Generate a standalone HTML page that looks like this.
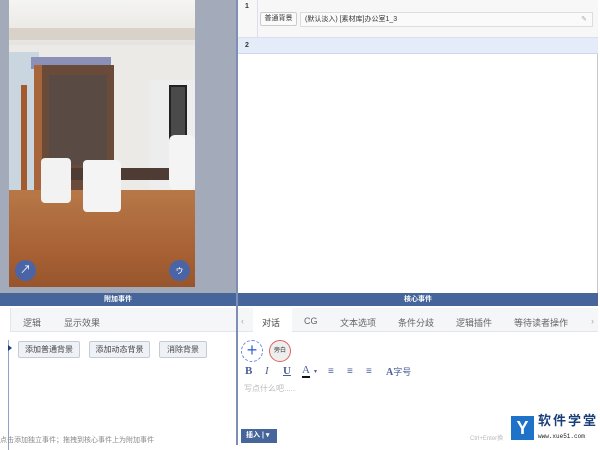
<!DOCTYPE html>
<html><head><meta charset="utf-8"><style>
*{margin:0;padding:0;box-sizing:border-box}
body{width:600px;height:445px;overflow:hidden;background:#fff;font-family:"Liberation Sans","Noto Sans CJK SC",sans-serif;position:relative;font-size:9px;color:#333}
.abs{position:absolute;white-space:nowrap}
.hdr{background:#46659a;color:#fff;font-size:7px;font-weight:bold;text-align:center;line-height:13px;height:13px}
.btn{position:absolute;border:1px solid #c5cbd6;background:#eef1f6;border-radius:2px;font-size:8px;color:#444;text-align:center;line-height:15px;height:17px}
.tab{position:absolute;font-size:9px;color:#666;top:316px}
</style></head><body>
<div class="abs" style="left:0;top:0;width:236px;height:293px;background:#a3abbb"></div>
<div class="abs" style="left:9px;top:0;width:186px;height:287px;overflow:hidden;background:#eceae6">
 <div class="abs" style="left:0;top:0;width:186px;height:45px;background:linear-gradient(#f4f4f2,#e6e4e0)"></div>
 <div class="abs" style="left:0;top:28px;width:186px;height:12px;background:#d8d2c8"></div>
 <div class="abs" style="left:0;top:52px;width:30px;height:140px;background:#c9d6e0"></div>
 <div class="abs" style="left:22px;top:57px;width:80px;height:12px;background:#8a90b8"></div>
 <div class="abs" style="left:140px;top:80px;width:46px;height:110px;background:#ededed"></div>
 <div class="abs" style="left:160px;top:85px;width:18px;height:58px;background:#4a4a4a;border:2px solid #222"></div>
 <div class="abs" style="left:25px;top:65px;width:80px;height:130px;background:#6a4a38;border-left:8px solid #a8643a"></div>
 <div class="abs" style="left:40px;top:75px;width:58px;height:90px;background:#5a4a44"></div>
 <div class="abs" style="left:12px;top:85px;width:6px;height:115px;background:#a35a2c"></div>
 <div class="abs" style="left:0;top:190px;width:186px;height:97px;background:linear-gradient(#b77848,#a96235 60%,#98552c)"></div>
 <div class="abs" style="left:60px;top:168px;width:126px;height:12px;background:#4e3c34"></div>
 <div class="abs" style="left:32px;top:158px;width:30px;height:45px;background:#f2f2f2;border-radius:4px"></div>
 <div class="abs" style="left:74px;top:160px;width:38px;height:52px;background:#f4f4f4;border-radius:4px"></div>
 <div class="abs" style="left:160px;top:135px;width:26px;height:55px;background:#f4f4f4;border-radius:6px"></div>
 <div class="abs" style="left:6px;top:260px;width:21px;height:21px;border-radius:50%;background:#4a64a6;color:#fff;font-size:11px;text-align:center;line-height:21px">↗</div>
 <div class="abs" style="left:160px;top:260px;width:21px;height:21px;border-radius:50%;background:#4a64a6;color:#fff;font-size:9px;text-align:center;line-height:21px">ゥ</div>
</div>
<div class="abs" style="left:236px;top:0;width:2px;height:445px;background:#7d8fb5"></div>
<div class="abs" style="left:238px;top:0;width:360px;height:293px;background:#fff;border-right:1px solid #c8c8c8"></div>
<div class="abs" style="left:238px;top:0;width:360px;height:38px;background:#f7f7f7;border-bottom:1px solid #dde"></div>
<div class="abs" style="left:238px;top:0;width:20px;height:54px;border-right:1px solid #dde"></div>
<div class="abs" style="left:245px;top:3px;font-size:7px;font-weight:bold">1</div>
<div class="abs" style="left:260px;top:12px;width:37px;height:14px;border:1px solid #ccc;background:#fafafa;font-size:7px;line-height:12px;text-align:center;border-radius:2px">普通背景</div>
<div class="abs" style="left:300px;top:12px;width:293px;height:15px;border:1px solid #ddd;background:#fafafa;font-size:7px;line-height:13px;padding-left:4px">(默认淡入) [素材库]办公室1_3<span style="position:absolute;right:5px;color:#aaa">✎</span></div>
<div class="abs" style="left:238px;top:38px;width:360px;height:16px;background:#e4ecfa;border-bottom:1px solid #cdd8ee"></div>
<div class="abs" style="left:245px;top:42px;font-size:7px;font-weight:bold">2</div>
<div class="abs hdr" style="left:0;top:293px;width:236px">附加事件</div>
<div class="abs hdr" style="left:238px;top:293px;width:360px">核心事件</div>
<div class="abs" style="left:10px;top:308px;width:226px;height:24px;background:#f5f6f8;border-bottom:1px solid #e3e5ea;border-left:1px solid #e3e5ea"></div>
<div class="tab" style="left:23px">逻辑</div>
<div class="tab" style="left:64px">显示效果</div>
<div class="abs" style="left:8px;top:340px;width:1px;height:110px;background:#8ea3c8"></div>
<div class="abs" style="left:8px;top:345px;width:0;height:0;border-top:3px solid transparent;border-bottom:3px solid transparent;border-left:4px solid #1f3f7a"></div>
<div class="btn" style="left:18px;top:341px;width:62px">添加普通背景</div>
<div class="btn" style="left:89px;top:341px;width:61px">添加动态背景</div>
<div class="btn" style="left:159px;top:341px;width:48px">消除背景</div>
<div class="abs" style="left:0;top:435px;font-size:7px;color:#888">点击添加独立事件；拖拽到核心事件上为附加事件</div>
<div class="abs" style="left:238px;top:308px;width:360px;height:24px;background:#f5f6f8;border-bottom:1px solid #e3e5ea"></div>
<div class="abs" style="left:253px;top:308px;width:39px;height:25px;background:#fff"></div>
<div class="tab" style="left:241px;color:#aaa">‹</div>
<div class="tab" style="left:262px;color:#444">对话</div>
<div class="tab" style="left:304px">CG</div>
<div class="tab" style="left:340px">文本选项</div>
<div class="tab" style="left:398px">条件分歧</div>
<div class="tab" style="left:456px">逻辑插件</div>
<div class="tab" style="left:514px">等待读者操作</div>
<div class="tab" style="left:591px;color:#aaa">›</div>
<div class="abs" style="left:241px;top:340px;width:22px;height:22px;border:1px dashed #6a86e0;border-radius:50%;color:#3d63d8;font-size:18px;line-height:19px;text-align:center">+</div>
<div class="abs" style="left:269px;top:340px;width:22px;height:22px;border:1px solid #e06060;border-radius:50%;background:#eee;font-size:6px;line-height:20px;text-align:center">旁白</div>
<div class="abs" style="left:245px;top:365px;font-size:11px;color:#4a5f95;font-family:'Liberation Serif',serif;font-weight:bold">B</div>
<div class="abs" style="left:265px;top:365px;font-size:11px;color:#4a5f95;font-family:'Liberation Serif',serif;font-style:italic">I</div>
<div class="abs" style="left:283px;top:365px;font-size:11px;color:#4a5f95;font-family:'Liberation Serif',serif;font-weight:bold;text-decoration:underline">U</div>
<div class="abs" style="left:302px;top:365px;font-size:11px;color:#4a5f95;font-family:'Liberation Serif',serif;border-bottom:2px solid #111;line-height:11px">A</div>
<div class="abs" style="left:314px;top:368px;font-size:6px;color:#4a5f95">▾</div>
<div class="abs" style="left:328px;top:366px;font-size:10px;color:#4a5f95">≡</div>
<div class="abs" style="left:347px;top:366px;font-size:10px;color:#4a5f95">≡</div>
<div class="abs" style="left:366px;top:366px;font-size:10px;color:#4a5f95">≡</div>
<div class="abs" style="left:386px;top:365px;font-size:10px;color:#4a5f95;font-family:'Liberation Serif',serif;font-weight:bold">A<span style="font-family:'Noto Sans CJK SC';font-weight:normal;font-size:9px">字号</span></div>
<div class="abs" style="left:244px;top:383px;font-size:8px;color:#bbb">写点什么吧.....</div>
<div class="abs" style="left:241px;top:429px;width:36px;height:14px;background:#46659a;color:#fff;font-size:7px;font-weight:bold;line-height:14px;padding-left:5px">插入 | ▾</div>
<div class="abs" style="left:470px;top:433px;font-size:6px;color:#bbb">Ctrl+Enter换</div>
<div class="abs" style="left:510px;top:416px;width:90px;height:29px;background:#fff"></div>
<div class="abs" style="left:511px;top:416px;width:23px;height:24px;background:#1e73c8;color:#fff;font-size:18px;font-weight:bold;text-align:center;line-height:24px">Y</div>
<div class="abs" style="left:538px;top:413px;font-size:13px;line-height:16px;font-weight:bold;color:#1a3f7a;letter-spacing:2px">软件学堂</div>
<div class="abs" style="left:538px;top:433px;font-size:6px;color:#222;font-family:'Liberation Mono',monospace">www.xue51.com</div>
</body></html>
